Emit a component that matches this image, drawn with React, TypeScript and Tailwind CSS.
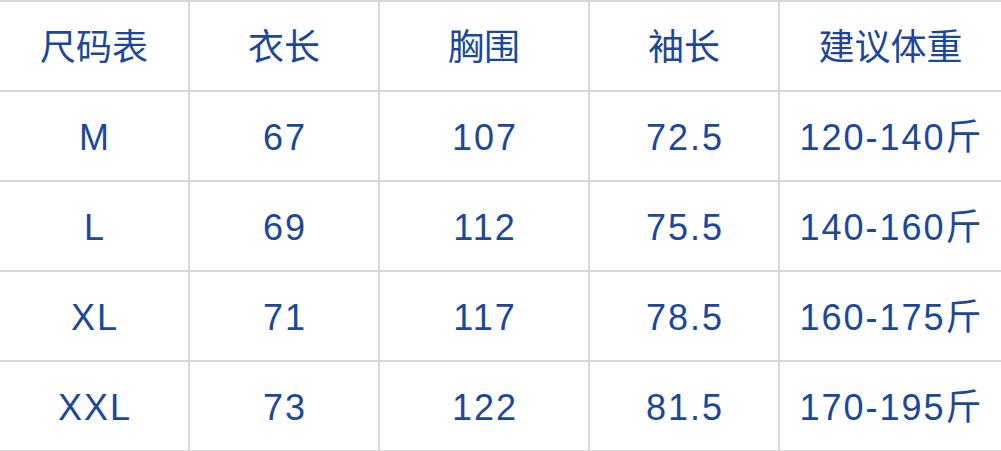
const headers = ['尺码表', '衣长', '胸围', '袖长', '建议体重'];

const rows = [
  ['M', '67', '107', '72.5', '120-140斤'],
  ['L', '69', '112', '75.5', '140-160斤'],
  ['XL', '71', '117', '78.5', '160-175斤'],
  ['XXL', '73', '122', '81.5', '170-195斤'],
];

// column widths include the 2px right border
const colClass = [
  'w-[190px] border-r-2',
  'w-[190px] border-r-2',
  'w-[210px] border-r-2',
  'w-[190px] border-r-2',
  'flex-1',
];

function Row({ cells, head }: { cells: string[]; head?: boolean }) {
  return (
    <div className="flex h-[90px] border-b-2 border-[#d7d7d7]">
      {cells.map((c, i) => (
        <div
          key={i}
          className={`${colClass[i]} flex items-center justify-center pt-[3px] border-[#d7d7d7] ${
            head ? '' : 'tracking-[2px] pl-[2px]'
          }`}
        >
          {c}
        </div>
      ))}
    </div>
  );
}

export default function App() {
  return (
    <div
      className="w-[1001px] h-[451px] overflow-hidden bg-white text-[36px] leading-none text-[#1d4797] border-t-2 border-[#d7d7d7]"
      style={{ fontFamily: '"Liberation Sans", "Noto Sans CJK SC", sans-serif' }}
    >
      <Row cells={headers} head />
      {rows.map((r) => (
        <Row key={r[0]} cells={r} />
      ))}
    </div>
  );
}
